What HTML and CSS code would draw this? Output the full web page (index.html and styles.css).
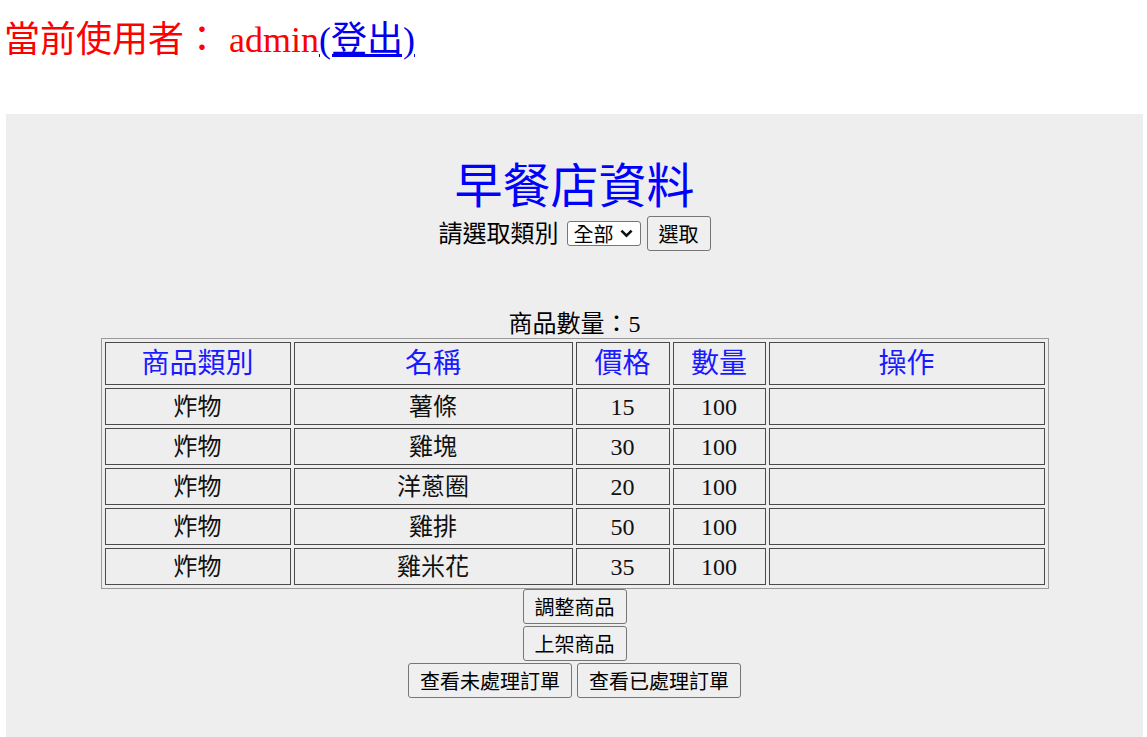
FILE: index.html
```html
<!DOCTYPE html>
<html lang="zh-Hant">
<head>
<meta charset="utf-8">
<title>早餐店資料</title>
<link rel="stylesheet" href="styles.css">
</head>
<body>
<div class="user">當前使用者： admin<a class="logout" href="#">(登出)</a></div>
<div class="panel">
  <h1 class="title">早餐店資料</h1>
  <form class="filter">
    <span class="filter-label">請選取類別</span>
    <span class="select-wrap">
      <select class="cat"><option>全部</option><option>炸物</option></select>
      <svg class="chev" width="13" height="9" viewBox="0 0 13 9"><path d="M1.4 1.6 L6.5 6.6 L11.6 1.6" fill="none" stroke="#111" stroke-width="2.6"/></svg>
    </span>
    <button type="button" class="btn">選取</button>
  </form>
  <div class="count">商品數量：5</div>
  <table class="items">
    <colgroup>
      <col class="c1"><col class="c2"><col class="c3"><col class="c4"><col class="c5">
    </colgroup>
    <thead>
      <tr>
        <th>商品類別</th>
        <th>名稱</th>
        <th>價格</th>
        <th>數量</th>
        <th>操作</th>
      </tr>
    </thead>
    <tbody>
      <tr><td>炸物</td><td>薯條</td><td>15</td><td>100</td><td></td></tr>
      <tr><td>炸物</td><td>雞塊</td><td>30</td><td>100</td><td></td></tr>
      <tr><td>炸物</td><td>洋蔥圈</td><td>20</td><td>100</td><td></td></tr>
      <tr><td>炸物</td><td>雞排</td><td>50</td><td>100</td><td></td></tr>
      <tr><td>炸物</td><td>雞米花</td><td>35</td><td>100</td><td></td></tr>
    </tbody>
  </table>
  <div class="actions">
    <div class="action-row"><button type="button" class="btn">調整商品</button></div>
    <div class="action-row"><button type="button" class="btn">上架商品</button></div>
    <div class="action-row"><button type="button" class="btn">查看未處理訂單</button><button type="button" class="btn">查看已處理訂單</button></div>
  </div>
</div>
</body>
</html>
```
FILE: styles.css
```css
html, body {
  margin: 0;
  padding: 0;
  background: #fff;
}

body {
  font-family: "Liberation Serif", "Noto Sans CJK TC", serif;
  color: #000;
}

.user {
  box-sizing: border-box;
  height: 114px;
  padding: 22px 0 0 4px;
  font-size: 36px;
  line-height: 36px;
  color: #ff0000;
}

.logout {
  color: #0000ee;
  text-decoration: underline;
}

.panel {
  margin-left: 6px;
  width: 1137px;
  background: #eeeeee;
  padding: 49px 0 60px;
  display: flex;
  flex-direction: column;
  align-items: center;
}

.title {
  margin: 0;
  font-size: 48px;
  line-height: 48px;
  font-weight: normal;
  color: #0000ff;
}

.filter {
  margin: 5px 0 0;
  display: flex;
  align-items: center;
  height: 35px;
  font-size: 24px;
  line-height: 24px;
}

.filter-label {
  margin-right: 8px;
}

.select-wrap {
  position: relative;
  display: inline-flex;
  margin-right: 6px;
}

.cat {
  -webkit-appearance: none;
  appearance: none;
  box-sizing: border-box;
  width: 74px;
  height: 25px;
  border: 1px solid #767676;
  border-radius: 3px;
  background: #fff;
  color: #000;
  font-family: "Noto Sans CJK TC", sans-serif;
  font-size: 20px;
  line-height: 23px;
  padding: 0 0 0 6px;
  margin: 0;
}

.chev {
  position: absolute;
  left: 53px;
  top: 8px;
  pointer-events: none;
}

.btn {
  box-sizing: border-box;
  height: 35px;
  padding: 0 11px;
  margin: 0;
  border: 1px solid #767676;
  border-radius: 3px;
  background: #efefef;
  color: #000;
  font-family: "Noto Sans CJK TC", sans-serif;
  font-size: 20px;
  line-height: 24px;
}

.count {
  margin-top: 61px;
  font-size: 24px;
  line-height: 24px;
}

.items {
  margin-top: 2px;
  width: 948px;
  table-layout: fixed;
  border-collapse: separate;
  border-spacing: 3px;
  border: 1px solid #9a9a9a;
  font-size: 24px;
}

.items th,
.items td {
  box-sizing: border-box;
  border: 1px solid #4a4a4a;
  padding: 0;
  text-align: center;
  vertical-align: middle;
}

.items th {
  height: 43px;
  font-size: 28px;
  line-height: 28px;
  font-weight: normal;
  color: #1a1aff;
}

.items td {
  height: 37px;
  line-height: 24px;
  color: #111;
}

.c1 { width: 186px; }
.c2 { width: 279px; }
.c3 { width: 94px; }
.c4 { width: 93px; }
.c5 { width: 276px; }

.actions {
  display: flex;
  flex-direction: column;
  align-items: center;
  gap: 2px;
}

.action-row {
  display: flex;
  gap: 5px;
}
```
